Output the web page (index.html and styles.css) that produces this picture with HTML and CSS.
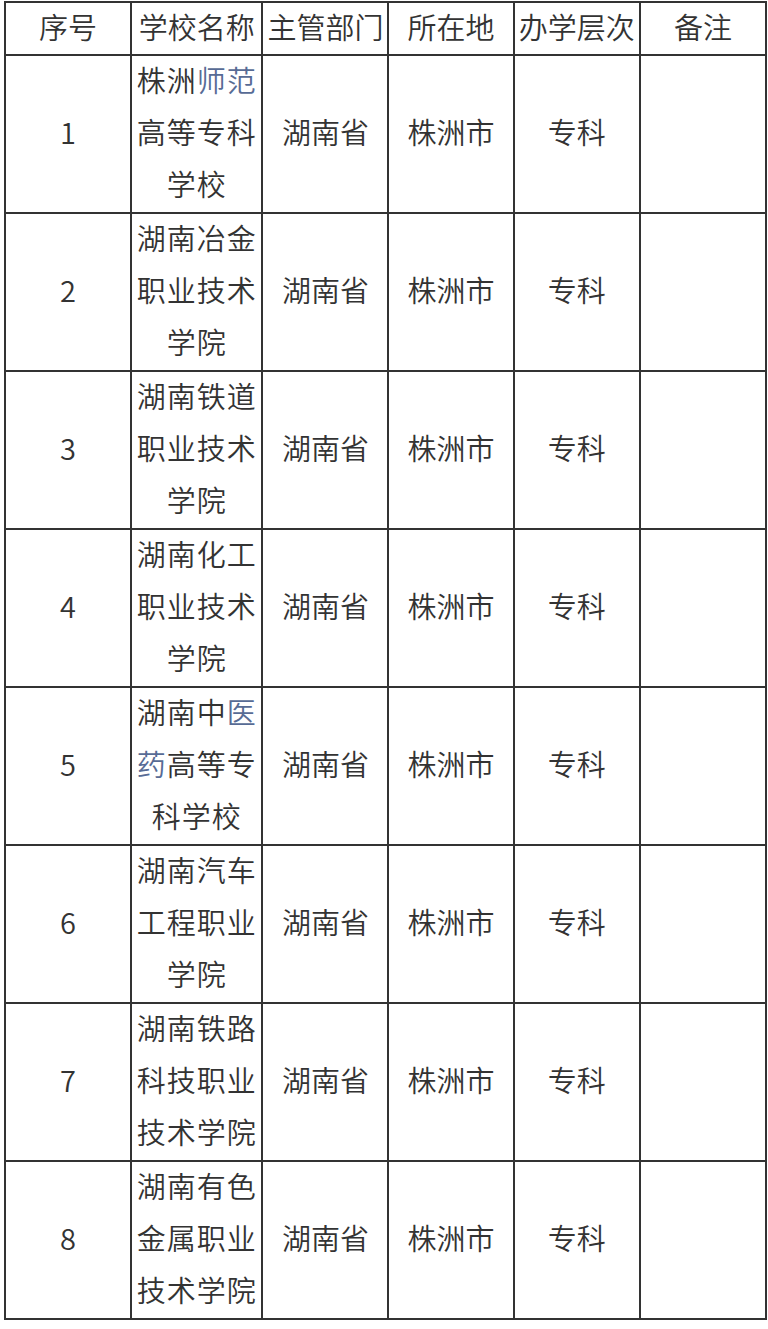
FILE: index.html
```html
<!DOCTYPE html>
<html lang="zh">
<head>
<meta charset="utf-8">
<link rel="stylesheet" href="styles.css">
</head>
<body>
<table class="schools">
  <colgroup>
    <col class="c1"><col class="c2"><col class="c3"><col class="c4"><col class="c5"><col class="c6">
  </colgroup>
  <thead>
    <tr class="head"><th>序号</th><th>学校名称</th><th>主管部门</th><th>所在地</th><th>办学层次</th><th>备注</th></tr>
  </thead>
  <tbody>
    <tr><td>1</td><td class="name"><div class="name-text">株洲<span class="link">师范</span>高等专科学校</div></td><td>湖南省</td><td>株洲市</td><td>专科</td><td></td></tr>
    <tr><td>2</td><td class="name"><div class="name-text">湖南冶金职业技术学院</div></td><td>湖南省</td><td>株洲市</td><td>专科</td><td></td></tr>
    <tr><td>3</td><td class="name"><div class="name-text">湖南铁道职业技术学院</div></td><td>湖南省</td><td>株洲市</td><td>专科</td><td></td></tr>
    <tr><td>4</td><td class="name"><div class="name-text">湖南化工职业技术学院</div></td><td>湖南省</td><td>株洲市</td><td>专科</td><td></td></tr>
    <tr><td>5</td><td class="name"><div class="name-text">湖南中<span class="link">医</span><span class="link">药</span>高等专科学校</div></td><td>湖南省</td><td>株洲市</td><td>专科</td><td></td></tr>
    <tr><td>6</td><td class="name"><div class="name-text">湖南汽车工程职业学院</div></td><td>湖南省</td><td>株洲市</td><td>专科</td><td></td></tr>
    <tr><td>7</td><td class="name"><div class="name-text">湖南铁路科技职业技术学院</div></td><td>湖南省</td><td>株洲市</td><td>专科</td><td></td></tr>
    <tr><td>8</td><td class="name"><div class="name-text">湖南有色金属职业技术学院</div></td><td>湖南省</td><td>株洲市</td><td>专科</td><td></td></tr>
  </tbody>
</table>
</body>
</html>
```

FILE: styles.css
```css
html, body {
  margin: 0;
  padding: 0;
  background: #ffffff;
}
body {
  padding: 1px 0 0 4px;
  font-family: "Noto Sans CJK SC", "Noto Sans", sans-serif;
  color: #333333;
}
.schools {
  border-collapse: collapse;
  table-layout: fixed;
  width: 763px;
  font-size: 29px;
  line-height: 52px;
}
.c1 { width: 126px; }
.c2 { width: 131px; }
.c3 { width: 126px; }
.c4 { width: 125px; }
.c5 { width: 126px; }
.c6 { width: 126px; }
.schools th,
.schools td {
  border: 2px solid #333333;
  padding: 0 2px 6px;
  text-align: center;
  vertical-align: middle;
  font-weight: 350;
}
.schools .head th {
  padding-bottom: 6px;
  line-height: 42px;
}
.schools tbody tr {
  height: 158px;
}
.schools .head {
  height: 53px;
}
.schools td.name {
  padding-bottom: 0;
  letter-spacing: 1px;
}
.name-text {
  margin-top: -6px;
}
.link {
  color: #576b95;
}
```
